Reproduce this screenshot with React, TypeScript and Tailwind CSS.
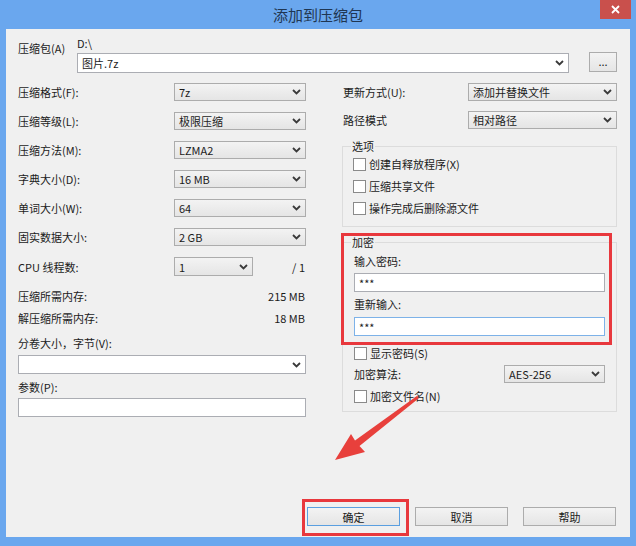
const Chevron = () => (
  <svg width="9" height="6" viewBox="0 0 9 6" className="shrink-0">
    <path d="M1 1L4.5 4.5L8 1" fill="none" stroke="#3a3a3a" strokeWidth="1.8" />
  </svg>
);

type SelectProps = { value?: string; className?: string; white?: boolean };

const Select = ({ value = "", className = "", white = false }: SelectProps) => (
  <div
    className={`flex items-center justify-between border px-[4px] ${
      white ? "border-[#abadb3] bg-white" : "border-[#acacac] bg-linear-to-b from-[#f3f3f3] to-[#e5e5e5]"
    } ${className}`}
  >
    <span>{value}</span>
    <Chevron />
  </div>
);

const Check = ({ label }: { label: string }) => (
  <div className="flex h-[14px] items-center gap-[3px]">
    <span className="h-[13px] w-[13px] border border-[#8a8a8a] bg-white" />
    <span>{label}</span>
  </div>
);

const Button = ({ label, primary = false }: { label: string; primary?: boolean }) => (
  <div
    className={`flex h-[19px] w-[93px] items-center justify-center border bg-linear-to-b from-[#f3f3f3] to-[#e5e5e5] ${
      primary ? "border-[#5a9fe0]" : "border-[#acacac]"
    }`}
  >
    {label}
  </div>
);

const leftRows = [
  { label: "压缩格式(F):", value: "7z" },
  { label: "压缩等级(L):", value: "极限压缩" },
  { label: "压缩方法(M):", value: "LZMA2" },
  { label: "字典大小(D):", value: "16 MB" },
  { label: "单词大小(W):", value: "64" },
  { label: "固实数据大小:", value: "2 GB" },
];

export default function App() {
  return (
    <div className="relative flex h-[546px] w-[636px] flex-col bg-[#6aa7ee] font-['Noto_Sans_CJK_SC',sans-serif] text-[11px] leading-[14px] text-[#1b1b1b]">
      {/* title bar */}
      <div className="relative flex h-[29px] items-center justify-center">
        <span className="text-[15px] text-[#1f3652]">添加到压缩包</span>
        <div className="absolute right-[5px] top-0 flex h-[19px] w-[31px] items-center justify-center bg-[#c9504c]">
          <svg width="9" height="9" viewBox="0 0 9 9">
            <path d="M1 1L8 8M8 1L1 8" stroke="#fff" strokeWidth="1.8" />
          </svg>
        </div>
      </div>

      {/* client area */}
      <div className="mx-[6px] mb-[9px] flex flex-1 flex-col bg-[#f0f0f0] pb-[11px] pl-[12px] pr-[13px] pt-[7px]">
        <div className="flex">
          <div className="w-[59px] pt-[5px]">压缩包(A)</div>
          <div className="flex w-[492px] flex-col">
            <div className="h-[17px]">D:\</div>
            <Select white value="图片.7z" className="h-[20px]" />
          </div>
          <div className="ml-[20px] mt-[16px] flex h-[20px] w-[28px] items-center justify-center border border-[#acacac] bg-linear-to-b from-[#f3f3f3] to-[#e5e5e5] pb-[3px]">
            ...
          </div>
        </div>

        <div className="mt-[10px] flex">
          {/* left column */}
          <div className="flex w-[288px] flex-col">
            <div className="flex flex-col gap-[11px]">
              {leftRows.map((r) => (
                <div key={r.label} className="flex h-[18px] items-center justify-between">
                  <span>{r.label}</span>
                  <Select value={r.value} className="h-[18px] w-[132px]" />
                </div>
              ))}
              <div className="flex h-[19px] items-center">
                <span className="w-[156px]">CPU 线程数:</span>
                <Select value="1" className="h-[19px] w-[79px]" />
                <span className="ml-auto pr-[1px]">/ 1</span>
              </div>
            </div>
            <div className="mt-[13px] flex justify-between pr-[1px]">
              <span>压缩所需内存:</span>
              <span>215 MB</span>
            </div>
            <div className="mt-[8px] flex justify-between pr-[1px]">
              <span>解压缩所需内存:</span>
              <span>18 MB</span>
            </div>
            <div className="mt-[11px]">分卷大小，字节(V):</div>
            <Select white className="mt-[5px] h-[19px]" />
            <div className="mt-[6px]">参数(P):</div>
            <div className="mt-[4px] h-[19px] border border-[#abadb3] bg-white" />
          </div>

          {/* right column */}
          <div className="ml-[36px] flex w-[275px] flex-col">
            <div className="flex h-[18px] items-center">
              <span className="w-[126px] pl-[1px]">更新方式(U):</span>
              <Select value="添加并替换文件" className="h-[18px] w-[149px]" />
            </div>
            <div className="mt-[10px] flex h-[18px] items-center">
              <span className="w-[126px] pl-[1px]">路径模式</span>
              <Select value="相对路径" className="h-[18px] w-[149px]" />
            </div>

            <fieldset className="mt-[10px] border border-[#dcdcdc] pb-[11px] pl-[8px] pr-[11px]">
              <legend className="px-[1px]">选项</legend>
              <div className="mt-[4px] flex flex-col gap-[8px] pl-[2px]">
                <Check label="创建自释放程序(X)" />
                <Check label="压缩共享文件" />
                <Check label="操作完成后删除源文件" />
              </div>
            </fieldset>

            <fieldset className="mt-[8px] border border-[#dcdcdc] pb-[8px] pl-[8px] pr-[11px]">
              <legend className="px-[1px]">加密</legend>
              <div className="flex flex-col pl-[3px]">
                <div className="mt-[5px]">输入密码:</div>
                <div className="mt-[5px] flex h-[19px] items-center border border-[#abadb3] bg-white pl-[4px]">***</div>
                <div className="mt-[5px]">重新输入:</div>
                <div className="mt-[6px] flex h-[19px] items-center border border-[#7db2e8] bg-white pl-[4px]">***</div>
                <div className="mt-[10px]">
                  <Check label="显示密码(S)" />
                </div>
                <div className="mt-[5px] flex h-[18px] items-center">
                  <span className="w-[150px]">加密算法:</span>
                  <Select value="AES-256" className="h-[18px] w-[101px]" />
                </div>
                <div className="mt-[6px]">
                  <Check label="加密文件名(N)" />
                </div>
              </div>
            </fieldset>
          </div>
        </div>

        <div className="mt-auto flex justify-end gap-[15px] pr-[1px]">
          <Button label="确定" primary />
          <Button label="取消" />
          <Button label="帮助" />
        </div>
      </div>

      {/* red annotations */}
      <div className="pointer-events-none absolute left-[341px] top-[233px] h-[112px] w-[271px] border-[3px] border-[#e8383d]" />
      <div className="pointer-events-none absolute left-[302px] top-[499px] h-[37px] w-[107px] border-[3px] border-[#e8383d]" />
      <svg className="pointer-events-none absolute inset-0" width="636" height="546" viewBox="0 0 636 546">
        <polygon
          points="335,460 365,452 359.5,446 418.8,398.2 417.2,395.8 355,440.5 351,434"
          fill="#e8403c"
        />
      </svg>
    </div>
  );
}
